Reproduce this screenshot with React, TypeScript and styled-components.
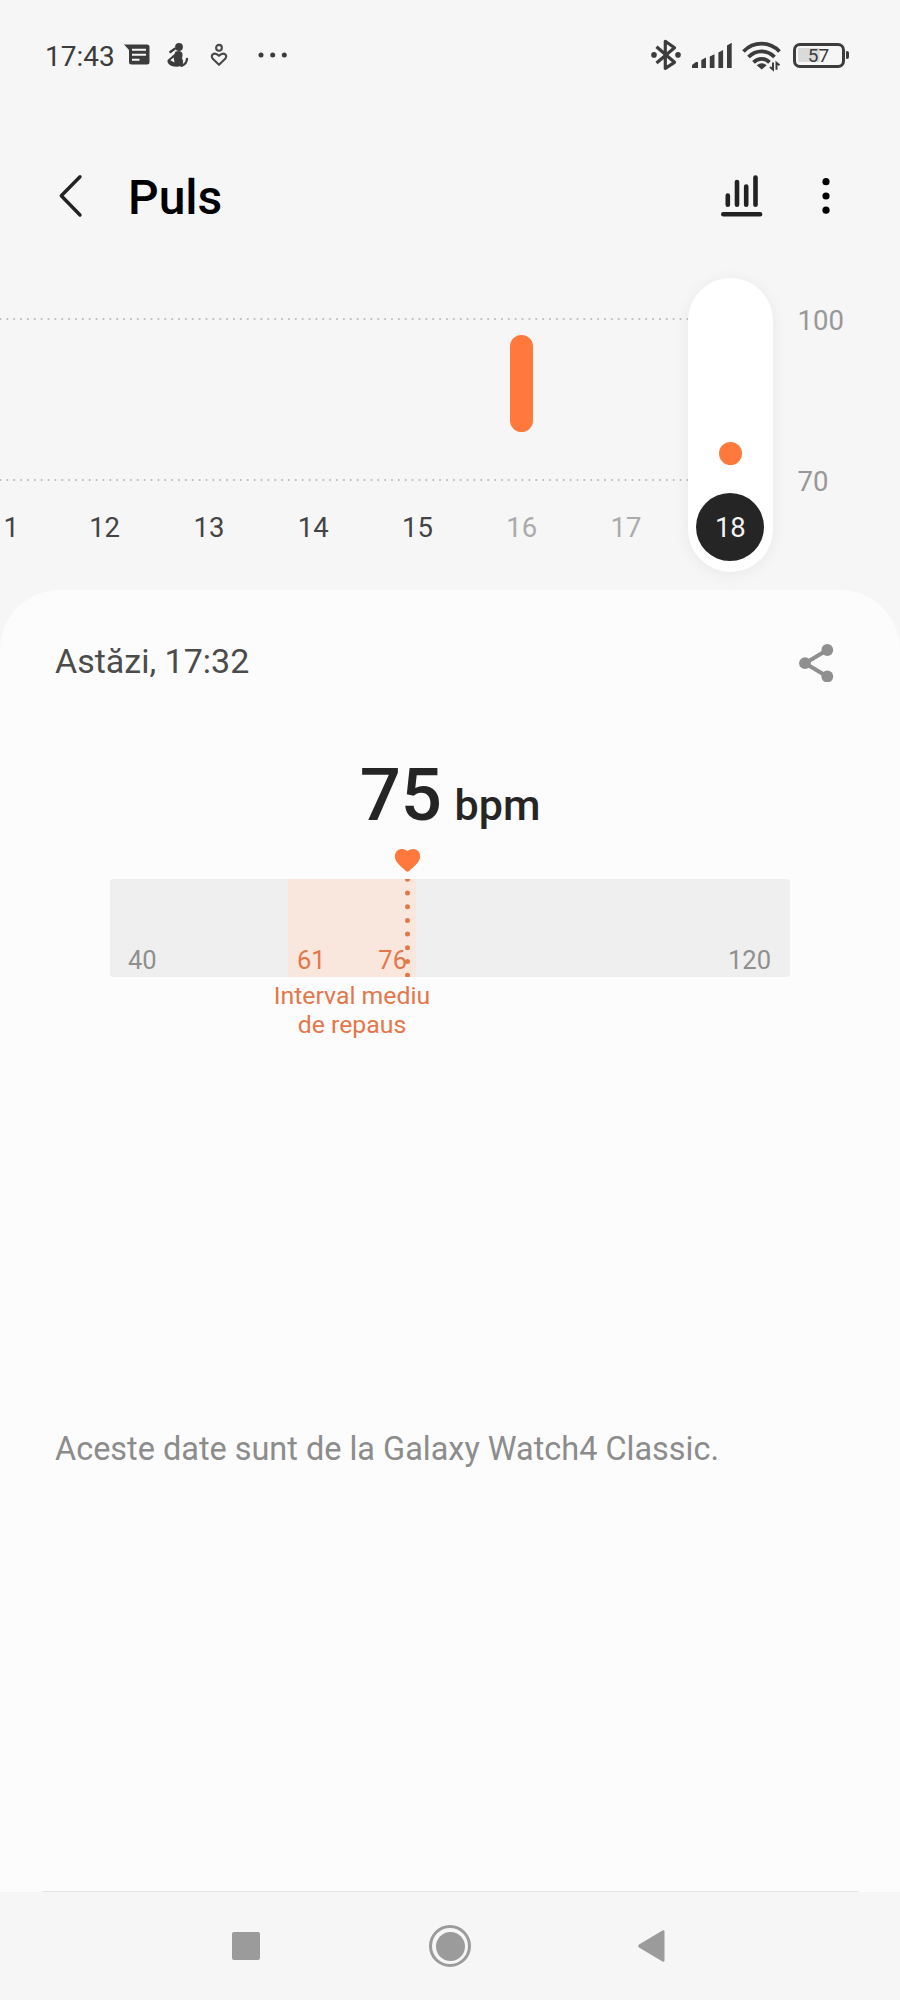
import React from "react";
import styled, { createGlobalStyle } from "styled-components";

const GlobalStyle = createGlobalStyle`
  *, *::before, *::after { box-sizing: border-box; }
  body { margin: 0; background: #f6f6f6; font-family: Roboto, "Liberation Sans", sans-serif; }
  svg { display: block; flex: none; }
`;

const ACCENT = "#ff783c";
const INK = "#3c3c3c";

const Screen = styled.div`
  display: flex;
  flex-direction: column;
  width: 900px;
  height: 2000px;
  overflow: hidden;
  background: #f6f6f6;
`;

/* Status bar */

const StatusBar = styled.div`
  display: flex;
  align-items: center;
  justify-content: space-between;
  height: 112px;
  padding: 0 51px 0 45px;
  color: ${INK};
`;

const StatusGroup = styled.div`
  display: flex;
  align-items: center;
`;

const StatusIcon = styled.div<{ $gap: number }>`
  margin-top: -2px;
  margin-left: ${(p) => p.$gap}px;
`;

const Clock = styled.span`
  width: 77px;
  padding-top: 1px;
  font-size: 28px;
  line-height: 34px;
  white-space: nowrap;
`;

const Battery = styled.div`
  display: flex;
  align-items: center;
  margin-left: 10px;
`;

const BatteryShell = styled.div<{ $level: number }>`
  display: flex;
  align-items: center;
  justify-content: center;
  width: 52px;
  height: 25px;
  margin-top: -2px;
  border: 3.5px solid ${INK};
  border-radius: 7px;
  background: linear-gradient(#dadada, #dadada) 2px center / ${(p) => p.$level * 0.38}px 14px no-repeat;
  font-size: 19px;
  line-height: 20px;
`;

const BatteryValue = styled.span`
  padding-top: 2px;
`;

const BatteryTip = styled.div`
  width: 3px;
  height: 8px;
  margin: -2px 0 0 1.5px;
  border-radius: 1px 2px 2px 1px;
  background: ${INK};
`;

/* App header */

const Header = styled.header`
  display: flex;
  align-items: center;
  height: 158px;
  padding: 10px 70.5px 0 55px;
`;

const Title = styled.h1`
  flex: 1;
  margin: 0;
  padding: 4px 0 0 41px;
  color: #000;
  font-size: 48px;
  font-weight: 500;
  line-height: 60px;
`;

const HeaderActions = styled.div`
  display: flex;
  align-items: center;
  gap: 58.5px;
`;

/* Daily chart */

const Chart = styled.section`
  position: relative;
  display: flex;
  height: 320px;
`;

const GridLines = styled.svg`
  position: absolute;
  left: 0;
  top: 0;
`;

const Days = styled.div`
  position: relative;
  display: flex;
  flex: none;
  justify-content: flex-end;
  width: 782.5px;
`;

const Day = styled.div<{ $clipped?: boolean }>`
  display: grid;
  flex: none;
  grid-template-rows: 223px 68px;
  justify-items: center;
  width: 104.3px;
  padding-left: ${(p) => (p.$clipped ? 22 : 0)}px;
`;

const DayLabel = styled.span<{ $muted?: boolean }>`
  color: ${(p) => (p.$muted ? "#ababab" : "#444")};
  font-size: 27.5px;
  line-height: 70px;
`;

const RangeBar = styled.div`
  width: 23px;
  height: 97px;
  margin-top: 65px;
  border-radius: 12px;
  background: ${ACCENT};
`;

const SelectedDay = styled.div`
  display: grid;
  flex: none;
  grid-template-rows: 215px 68px;
  justify-items: center;
  width: 85px;
  height: 294px;
  margin: 8px 9.65px 0;
  border-radius: 43px;
  background: #fff;
  box-shadow: 0 2px 16px rgba(0, 0, 0, 0.06);
`;

const Reading = styled.div`
  width: 23px;
  height: 23px;
  margin-top: 164px;
  border-radius: 50%;
  background: ${ACCENT};
`;

const SelectedLabel = styled.span`
  width: 68px;
  height: 68px;
  border-radius: 50%;
  background: #252525;
  color: #f4f4f4;
  font-size: 27.5px;
  line-height: 70px;
  text-align: center;
`;

const Axis = styled.div`
  display: flex;
  flex-direction: column;
  gap: 127px;
  padding: 34px 0 0 15px;
  color: #989898;
  font-size: 27.5px;
  line-height: 34px;
`;

/* Detail sheet */

const Sheet = styled.main`
  display: flex;
  flex: 1;
  flex-direction: column;
  border-radius: 60px 60px 0 0;
  background: #fcfcfc;
`;

const SheetHeader = styled.div`
  display: flex;
  align-items: center;
  justify-content: space-between;
  height: 62px;
  margin-top: 40px;
  padding: 0 64px 0 55px;
  color: #4b4b4b;
  font-size: 34px;
  line-height: 60px;
`;

const SheetDate = styled.span`
  margin-top: -1px;
`;

const Value = styled.div`
  display: flex;
  align-items: baseline;
  justify-content: center;
  gap: 12.5px;
  height: 80px;
  margin-top: 64px;
  color: #252525;
  font-weight: 500;
  line-height: 80px;
`;

const ValueNumber = styled.span`
  font-size: 72.5px;
`;

const ValueUnit = styled.span`
  font-size: 43px;
`;

const Gauge = styled.div`
  position: relative;
  width: 680px;
  margin: 0 auto;
`;

const MarkerRow = styled.div`
  height: 43px;
  padding: 12px 0 0 284px;
`;

const GaugeTrack = styled.div`
  display: grid;
  grid-template-columns: 178px 128px 374px;
  height: 98px;
  overflow: hidden;
  border-radius: 3px;
  background: #efefef;
`;

const GaugeZone = styled.div<{ $resting?: boolean; $pad: string; $end?: boolean }>`
  display: flex;
  align-items: flex-end;
  justify-content: ${(p) => (p.$resting ? "space-between" : p.$end ? "flex-end" : "flex-start")};
  padding: ${(p) => p.$pad};
  background: ${(p) => (p.$resting ? "#f9e6dd" : "transparent")};
  color: ${(p) => (p.$resting ? "#e5764a" : "#8f8f8f")};
  font-size: 25.500px;
  line-height: 30px;
`;

const MarkerLine = styled.svg`
  position: absolute;
  left: 294px;
  top: 43px;
`;

const GaugeCaption = styled.p`
  width: 200px;
  margin: 4px 0 0 142px;
  color: #e5764a;
  font-size: 24.8px;
  line-height: 29px;
  text-align: center;
`;

const Source = styled.p`
  margin: 390px 0 0;
  padding-left: 55px;
  color: #8c8c8c;
  font-size: 32.450px;
  line-height: 40px;
  white-space: nowrap;
`;

const Divider = styled.hr`
  width: 816px;
  height: 1.5px;
  margin: auto auto 0 42px;
  border: 0;
  background: #e4e4e4;
`;

/* System navigation */

const NavBar = styled.nav`
  display: flex;
  align-items: center;
  height: 108px;
  padding-left: 232px;
`;

const HomeButton = styled.div`
  width: 42px;
  height: 42px;
  margin: 0 167px 0 169px;
  padding: 3.500px;
  border: 3.5px solid #9b9b9b;
  border-radius: 50%;
  background: #9b9b9b content-box;
`;

const RecentsButton = styled.div`
  width: 28px;
  height: 28px;
  border-radius: 2px;
  background: #9b9b9b;
`;

const MessageIcon = () => (
  <svg width="28" height="26" viewBox="0 0 28 26" fill={INK}>
    <path d="M0 2.500h23q2.500 0 2.500 2.500v15q0 2.500-2.500 2.500H7.500Q5 22.500 5 20V8Z" />
    <path d="M8 7.800h14M8 12.800h14M8 17.800h7.500" stroke="#f6f6f6" strokeWidth="1.900" />
  </svg>
);

const FigureIcon = () => (
  <svg width="22" height="28" viewBox="0 0 22 28" fill={INK}>
    <circle cx="12" cy="6" r="3.900" />
    <path d="M8.500 10.500Q14 9 15.300 12q.6 3-.3 5 2 3.500.8 6-1.500 2.800-6 2.800-6 0-8.500-3.300Q0 20.500 .6 19L7.500 13Z" />
    <path d="M3.300 11l4.500-3.300M14.500 24.800q5.300-1.800 5.500-7" fill="none" stroke={INK} strokeWidth="2.300" strokeLinecap="round" />
    <path d="M3.300 19.200l3.400-2.700.8 4.900Z" fill="#f6f6f6" />
  </svg>
);

const CareIcon = () => (
  <svg width="18" height="26" viewBox="0 0 18 26" fill="none" stroke="#4a4a4a" strokeWidth="2.100">
    <circle cx="9" cy="5.800" r="2.900" />
    <path d="M9 22.800L2.800 16.800Q.8 14.200 2.800 12.300 5.600 10.300 9 13.800q3.400-3.500 6.200-1.500 2 1.900 0 4.500Z" strokeLinejoin="round" />
  </svg>
);

const MoreDots = () => (
  <svg width="30" height="6" viewBox="0 0 30 6" fill={INK}>
    <circle cx="3" cy="3" r="2.500" />
    <circle cx="14.700" cy="3" r="2.500" />
    <circle cx="26.300" cy="3" r="2.500" />
  </svg>
);

const BluetoothIcon = () => (
  <svg width="32" height="34" viewBox="650 38 32 34" fill="none" stroke={INK} strokeWidth="3.200">
    <path d="M655.500 46.800L673.500 62.300 664.300 68.300V41.300L673.500 47.800 655.500 63" strokeLinejoin="round" />
    <circle cx="653" cy="54.900" r="2.800" fill={INK} stroke="none" />
    <circle cx="677" cy="54.900" r="2.800" fill={INK} stroke="none" />
  </svg>
);

const SignalIcon = () => (
  <svg width="42" height="34" viewBox="690 38 42 34" fill={INK}>
    <path d="M691 68v-3l4-3h2V68ZM700.300 68V60l4.700-2.500V68ZM708.800 68V56.500l4.700-2.300V68ZM717.400 68V52.500l4.700-2.500V68ZM726 68V45.500l4.700-2.700V68Z" />
  </svg>
);

const WifiIcon = () => (
  <svg width="42" height="34" viewBox="740 38 42 34" fill="none" stroke={INK} strokeWidth="3.800">
    <path d="M742.500 51.500Q750 43.700 760.500 43.700T778.500 51.500" />
    <path d="M747.500 57Q753 51.300 760.500 51.300T773.500 57" />
    <path d="M752.500 62.300Q756 58.800 760.500 58.800T768.500 62.300" />
    <path d="M755.700 65.300q5-4.300 10 0l-5 4.300Z" fill={INK} stroke="none" />
    <path d="M772 62.500v7l-3-2.500M775.500 69.800v-7l3 2.500" strokeWidth="2" />
  </svg>
);

const BackIcon = () => (
  <svg width="32" height="48" viewBox="56 172 32 48" fill="none" stroke="#222" strokeWidth="3.400" strokeLinecap="round" strokeLinejoin="round">
    <path d="M81 176.800L62.300 195.700 81 215" />
  </svg>
);

const StatsIcon = () => (
  <svg width="42" height="48" viewBox="721 172 42 48" fill="none" stroke="#222" strokeWidth="4.600" strokeLinecap="round">
    <path d="M727.800 195.500v9.300M737 182v22.800M746.200 186.500v18.300M755.500 177.500v27.300M723.300 214.200h36.800" />
  </svg>
);

const MenuIcon = () => (
  <svg width="8" height="48" viewBox="821.500 172 8 48" fill="#000">
    <circle cx="825.500" cy="181.700" r="3.600" />
    <circle cx="825.500" cy="196" r="3.600" />
    <circle cx="825.500" cy="210.200" r="3.600" />
  </svg>
);

const ShareIcon = () => (
  <svg width="38" height="42" viewBox="798 640 38 42" fill="#8f8f8f">
    <path d="M827.300 650L805 663.200 827.300 676.500" fill="none" stroke="#8f8f8f" strokeWidth="4" />
    <circle cx="827.300" cy="650" r="5.900" />
    <circle cx="805" cy="663.200" r="5.900" />
    <circle cx="827.300" cy="676.500" r="5.900" />
  </svg>
);

const HeartIcon = () => (
  <svg width="28" height="26" viewBox="394 848 28 26" fill={ACCENT}>
    <path d="M407.500 851.300C411 848 416.500 848.500 418.900 852c2.200 3.500 1.300 8-1.500 11-3 3.500-6 6-8.200 7.900q-1.700 1.500-3.400 0c-2.200-1.900-5.200-4.400-8.200-7.900-2.800-3-3.700-7.500-1.500-11C398.500 848.500 404 848 407.500 851.300Z" />
  </svg>
);

const BackTriangle = () => (
  <svg width="28" height="34" viewBox="0 0 28 34" fill="#9b9b9b">
    <path d="M1 15.500L24.500 1.500q2-1 2 1V31.500q0 2-2 1L1 18.500q-1.500-1.500 0-3Z" />
  </svg>
);

const days = [
  { day: "1", clipped: true },
  { day: "12" },
  { day: "13" },
  { day: "14" },
  { day: "15" },
  { day: "16", muted: true, bar: true },
  { day: "17", muted: true },
];

export default function App() {
  return (
    <Screen>
      <GlobalStyle />
      <StatusBar>
        <StatusGroup>
          <Clock>17:43</Clock>
          <StatusIcon $gap={1.5}><MessageIcon /></StatusIcon>
          <StatusIcon $gap={15.5}><FigureIcon /></StatusIcon>
          <StatusIcon $gap={21}><CareIcon /></StatusIcon>
          <StatusIcon $gap={30}><MoreDots /></StatusIcon>
        </StatusGroup>
        <StatusGroup>
          <StatusIcon $gap={0}><BluetoothIcon /></StatusIcon>
          <StatusIcon $gap={8}><SignalIcon /></StatusIcon>
          <StatusIcon $gap={8}><WifiIcon /></StatusIcon>
          <Battery>
            <BatteryShell $level={57}>
              <BatteryValue>57</BatteryValue>
            </BatteryShell>
            <BatteryTip />
          </Battery>
        </StatusGroup>
      </StatusBar>

      <Header>
        <BackIcon />
        <Title>Puls</Title>
        <HeaderActions>
          <StatsIcon />
          <MenuIcon />
        </HeaderActions>
      </Header>

      <Chart>
        <GridLines width="690" height="320" fill="none" stroke="#bdbdbd" strokeWidth="2.200" strokeLinecap="round" strokeDasharray="0 6.870">
          <path d="M.4 49H690M.4 210H690" />
        </GridLines>
        <Days>
          {days.map((d) => (
            <Day key={d.day} $clipped={d.clipped}>
              <div>{d.bar && <RangeBar />}</div>
              <DayLabel $muted={d.muted}>{d.day}</DayLabel>
            </Day>
          ))}
          <SelectedDay>
            <Reading />
            <SelectedLabel>18</SelectedLabel>
          </SelectedDay>
        </Days>
        <Axis>
          <span>100</span>
          <span>70</span>
        </Axis>
      </Chart>

      <Sheet>
        <SheetHeader>
          <SheetDate>Astăzi, 17:32</SheetDate>
          <ShareIcon />
        </SheetHeader>
        <Value>
          <ValueNumber>75</ValueNumber>
          <ValueUnit>bpm</ValueUnit>
        </Value>
        <Gauge>
          <MarkerRow><HeartIcon /></MarkerRow>
          <GaugeTrack>
            <GaugeZone $pad="0 0 2px 18px">40</GaugeZone>
            <GaugeZone $resting $pad="0 9px 2px 9px">
              <span>61</span>
              <span>76</span>
            </GaugeZone>
            <GaugeZone $end $pad="0 19px 2px 0">120</GaugeZone>
          </GaugeTrack>
          <MarkerLine width="7" height="98" fill="none" stroke="#e07a4c" strokeWidth="5" strokeLinecap="round" strokeDasharray="0 13.700">
            <path d="M3.500 .3V98" />
          </MarkerLine>
          <GaugeCaption>
            Interval mediu
            <br />
            de repaus
          </GaugeCaption>
        </Gauge>
        <Source>Aceste date sunt de la Galaxy Watch4 Classic.</Source>
        <Divider />
      </Sheet>

      <NavBar>
        <RecentsButton />
        <HomeButton />
        <BackTriangle />
      </NavBar>
    </Screen>
  );
}
